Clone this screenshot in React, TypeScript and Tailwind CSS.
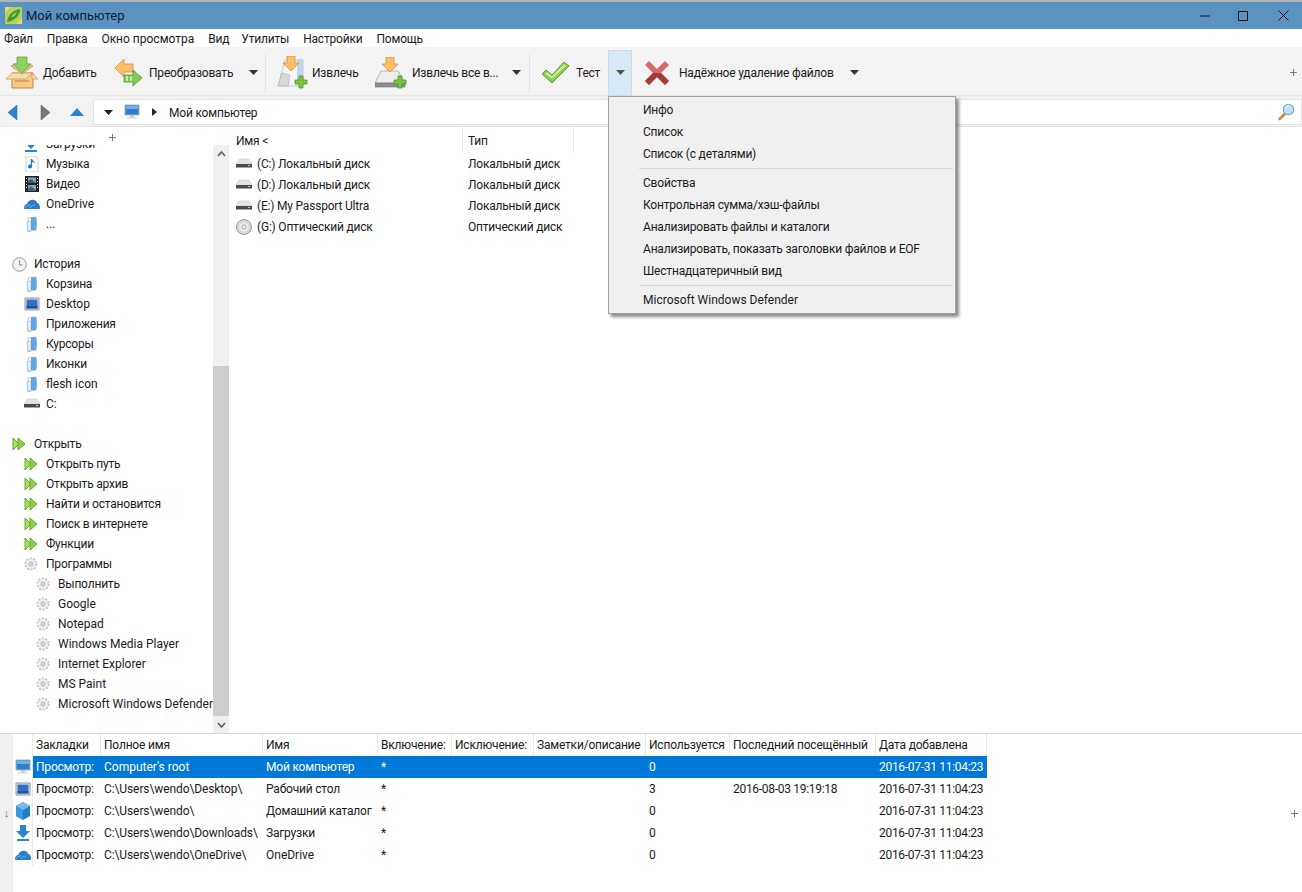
import React from 'react';

const font = "[font-family:'Roboto','Noto_Sans',sans-serif]";

// roboto runs a little wide on cyrillic and digits compared to the original ui font
const tr = (s: string) => {
  if (/[А-Яа-яЁё]/.test(s)) return 'tracking-[-0.2px]';
  if (/^\d{4}-/.test(s)) return 'tracking-[-0.3px]';
  if (s.includes('\\')) return 'tracking-[-0.1px]';
  return 'tracking-normal';
};

const Caret = ({ className = 'text-[#333]' }: { className?: string }) => (
  <svg width="9" height="5" viewBox="0 0 9 5" className={className}><path d="M0 0h9L4.5 5z" fill="currentColor" /></svg>
);

const Plus = () => (
  <svg width="7" height="7" viewBox="0 0 7 7"><path d="M3.5 0v7M0 3.5h7" stroke="#777" strokeWidth="1" /></svg>
);

const AppIcon = () => (
  <svg width="17" height="17" viewBox="0 0 17 17">
    <rect width="17" height="17" fill="#b9cf5a" />
    <path d="M0 0h6L0 6zM17 17h-6l6-6z" fill="#e6d87a" />
    <path d="M2 15C3 8 8 3 15 2 15 9 9 14 2 15z" fill="#3f9a2e" />
    <path d="M6 10c1-2 3-4 6-5-1 3-3 5-6 5z" fill="#8fd35a" />
  </svg>
);

const GreenPlus = ({ x, y }: { x: number; y: number }) => (
  <path transform={`translate(${x} ${y})`} d="M4 0h4v4h4v4H8v4H4V8H0V4h4z" fill="#7cc242" stroke="#4f9a23" strokeWidth=".8" />
);

const OrangeDown = ({ x, y }: { x: number; y: number }) => (
  <path transform={`translate(${x} ${y})`} d="M4 0h8v7h4l-8 8-8-8h4z" fill="#fbbf6a" stroke="#e08f2a" strokeWidth=".8" />
);

const BoxAdd = () => (
  <svg width="34" height="34" viewBox="0 0 34 34">
    <path d="M7 17h21v15H7z" fill="#f4c98a" stroke="#c98a3a" />
    <path d="M7 17 1 23h20l6-6zM27 17l6 6h-6z" fill="#f7dcae" stroke="#d09a50" strokeWidth=".8" />
    <path d="M6 10l11 8 11-8-4-2H10z" fill="#e8c48c" stroke="#c98a3a" strokeWidth=".7" />
    <path d="M12 1h10v7h4l-9 9-9-9h4z" fill="#8fd066" stroke="#5fa838" strokeWidth=".8" />
    <path d="M10 24h14v2H10z" fill="#c98a3a" opacity=".6" />
  </svg>
);

const Convert = () => (
  <svg width="28" height="28" viewBox="0 0 28 28">
    <path d="M0 9l9-9v5h9v8H9v5z" fill="#fbbf6a" stroke="#dd8d2b" strokeWidth=".8" />
    <path d="M27 19l-9-8v5H9v7h9v4z" fill="#86c957" stroke="#4f9a23" strokeWidth=".8" />
    <path d="M11 17h2v5h-2zM15 17h2v5h-2z" fill="#c6eaa6" />
  </svg>
);

const ExtractDoc = () => (
  <svg width="32" height="34" viewBox="0 0 32 34">
    <path d="M9 4h18v26H2z" fill="#f4f6f8" stroke="#c4c8cc" />
    <path d="M21 3h6v24h-6z" fill="#bcd6ec" />
    <path d="M2 30l4-13 8 2-2 11z" fill="#d8dbde" stroke="#aaa" strokeWidth=".6" />
    <OrangeDown x={7} y={0} />
    <GreenPlus x={19} y={20} />
  </svg>
);

const ExtractDrive = () => (
  <svg width="32" height="32" viewBox="0 0 32 32">
    <path d="M6 14h17l7 12H0z" fill="#eceded" stroke="#b5b5b5" />
    <path d="M0 26h30v4H0z" fill="#8e8e8e" stroke="#6f6f6f" strokeWidth=".6" />
    <OrangeDown x={7} y={0} />
    <GreenPlus x={19} y={19} />
  </svg>
);

const Check = () => (
  <svg width="27" height="22" viewBox="0 0 27 22">
    <path d="M0 12l4-4 6 5L22 0l5 4L10 21z" fill="#8ccb4e" stroke="#5f9f2c" />
    <path d="M3 12l2-2 5 4L22 2l2 2L10 17z" fill="#c4e89c" />
  </svg>
);

const RedX = () => (
  <svg width="24" height="24" viewBox="0 0 24 24">
    <path d="M4 0l8 8 8-8 4 4-8 8 8 8-4 4-8-8-8 8-4-4 8-8-8-8z" fill="#d66a6a" />
    <path d="M8 12l4 0 4 0 8 8-4 4-8-8-8 8-4-4z" fill="#a23b3b" />
  </svg>
);

const Monitor = ({ size = 16 }: { size?: number }) => (
  <svg width={size} height={size} viewBox="0 0 16 16">
    <path d="M1 1h14v10H1z" fill="#2f7fd0" stroke="#9fb4c4" />
    <path d="M2 2h12v3H2z" fill="#6fb0ea" />
    <path d="M6 11h4v2H6z" fill="#c4c8cc" />
    <path d="M3 13h10v1.5H3z" fill="#d6d8da" />
  </svg>
);

const Desktop = () => (
  <svg width="16" height="16" viewBox="0 0 16 16">
    <path d="M1 2h14v12H1z" fill="#e8ecef" stroke="#778" strokeWidth=".8" />
    <path d="M2.5 3.5h11v9h-11z" fill="#2f72c4" />
    <path d="M2.5 10h11v2.500h-11z" fill="#1d569e" />
  </svg>
);

const Folder = () => (
  <svg width="16" height="16" viewBox="0 0 16 16">
    <path d="M4 2l8-1v13l-8 1.500z" fill="#fff" stroke="#9fb0bc" strokeWidth=".7" />
    <path d="M7 1.500l5-.5c1 4 1 9 0 13H7z" fill="#5fa6e6" />
    <path d="M3 6l4-1v10l-3 .5z" fill="#e4eef6" stroke="#90a8ba" strokeWidth=".6" />
  </svg>
);

const Music = () => (
  <svg width="16" height="16" viewBox="0 0 16 16">
    <path d="M2 0h9l3 3v13H2z" fill="#fff" stroke="#b8c2ca" strokeWidth=".8" />
    <path d="M8 3v7.500a2 2 0 1 1-1.200-1.800V3z M8 3c1 2 3 2 3 5-1-2-2-2-3-2z" fill="#1f7cc7" />
  </svg>
);

const Film = () => (
  <svg width="16" height="16" viewBox="0 0 16 16">
    <path d="M1 0h14v16H1z" fill="#222" />
    <path d="M4 1.500h8v5.500H4zM4 9h8v5.500H4z" fill="#7fa8bc" />
    <path d="M4 5l3-2 5 4H4zM4 12.500l3-2 5 4H4z" fill="#3d5f70" />
    <path d="M2 2h1v1H2zM2 5h1v1H2zM2 8h1v1H2zM2 11h1v1H2zM13 2h1v1h-1zM13 5h1v1h-1zM13 8h1v1h-1zM13 11h1v1h-1z" fill="#ddd" />
  </svg>
);

const Cloud = () => (
  <svg width="16" height="16" viewBox="0 0 16 16">
    <path d="M0 12c0-3 2-4 3-4 1-3 4-5 7-4 2 .5 3 2 3 3 2 0 3 2 3 5 0 .5-.5 1-1 1H1c-.5 0-1-.5-1-1z" fill="#2a7dc9" />
    <path d="M1 12c1-2 3-3 5-3M6 12c1-2 3-3 5-3" stroke="#8cc2ec" strokeWidth=".8" fill="none" />
  </svg>
);

const Clock = () => (
  <svg width="15" height="15" viewBox="0 0 15 15">
    <circle cx="7.500" cy="7.500" r="6.800" fill="#f2f2f2" stroke="#9a9a9a" />
    <path d="M7.500 3v5h3" stroke="#8a8a8a" fill="none" />
  </svg>
);

const Disk = () => (
  <svg width="16" height="16" viewBox="0 0 16 16">
    <path d="M3 3h10l3 5H0z" fill="#e4e4e4" stroke="#c4c4c4" strokeWidth=".5" />
    <path d="M0 8h16v3.500H0z" fill="#4a4a4a" />
    <path d="M12 9h2v1h-2z" fill="#ccc" />
  </svg>
);

const Cd = () => (
  <svg width="16" height="16" viewBox="0 0 16 16">
    <circle cx="8" cy="8" r="7.500" fill="#d8d8d8" stroke="#9a9a9a" />
    <circle cx="8" cy="8" r="4.500" fill="#ececec" />
    <circle cx="8" cy="8" r="2" fill="#fff" stroke="#a0a0a0" />
  </svg>
);

const Arrows = () => (
  <svg width="14" height="14" viewBox="0 0 14 14">
    <path d="M1 1l6 6-6 6z" fill="#a8e05a" stroke="#58a32a" strokeWidth=".9" />
    <path d="M6 1l7 6-7 6z" fill="#8fd14a" stroke="#58a32a" strokeWidth=".9" />
  </svg>
);

const Gear = () => (
  <svg width="14" height="14" viewBox="0 0 14 14">
    <circle cx="7" cy="7" r="5.600" fill="#ededed" stroke="#c2c2c2" strokeWidth="1.800" strokeDasharray="2 1.500" />
    <circle cx="7" cy="7" r="4.600" fill="#efefef" />
    <circle cx="7" cy="7" r="2.300" fill="#d4d4d4" stroke="#b0b0b0" strokeWidth=".6" />
  </svg>
);

const Home = () => (
  <svg width="16" height="18" viewBox="0 0 16 18">
    <path d="M8 0l7 4v10l-7 4-7-4V4z" fill="#1f7cc7" />
    <path d="M8 0l7 4-7 4-7-4z" fill="#7cbcec" />
    <path d="M8 8v10l-7-4V4z" fill="#3e96dc" />
  </svg>
);

const Download = () => (
  <svg width="14" height="16" viewBox="0 0 14 16">
    <path d="M4 0h6v6h4l-7 7-7-7h4z" fill="#2a84d2" />
    <path d="M1 14h12v2H1z" fill="#2a84d2" />
  </svg>
);

const Search = () => (
  <svg width="18" height="18" viewBox="0 0 18 18">
    <path d="M7 10l-5.500 5.500a1.200 1.200 0 0 0 1.500 1.500L8.500 12z" fill="#d98a35" stroke="#a96420" strokeWidth=".5" />
    <circle cx="11.500" cy="6.500" r="5.200" fill="#bfe0f5" stroke="#7fa8c4" strokeWidth="1.200" />
    <path d="M8.500 5c.5-1.500 2-2.500 3.500-2.500" stroke="#fff" fill="none" />
  </svg>
);

const ToolButton = ({ icon, label, caret, textMl, w }: { icon: React.ReactNode; label: string; caret?: number; textMl: string; w: string }) => (
  <div className={`flex items-center shrink-0 ${w}`}>
    {icon}
    <span className={`${textMl} whitespace-nowrap tracking-[-0.2px]`}>{label}</span>
    {caret !== undefined && <span className="flex" style={{ marginLeft: caret }}><Caret /></span>}
  </div>
);

type TreeRow = { label?: string; level?: number; icon?: React.ReactNode };

const tree: TreeRow[] = [
  { label: 'Загрузки', level: 1, icon: <Download /> },
  { label: 'Музыка', level: 1, icon: <Music /> },
  { label: 'Видео', level: 1, icon: <Film /> },
  { label: 'OneDrive', level: 1, icon: <Cloud /> },
  { label: '...', level: 1, icon: <Folder /> },
  {},
  { label: 'История', level: 0, icon: <Clock /> },
  { label: 'Корзина', level: 1, icon: <Folder /> },
  { label: 'Desktop', level: 1, icon: <Desktop /> },
  { label: 'Приложения', level: 1, icon: <Folder /> },
  { label: 'Курсоры', level: 1, icon: <Folder /> },
  { label: 'Иконки', level: 1, icon: <Folder /> },
  { label: 'flesh icon', level: 1, icon: <Folder /> },
  { label: 'C:', level: 1, icon: <Disk /> },
  {},
  { label: 'Открыть', level: 0, icon: <Arrows /> },
  { label: 'Открыть путь', level: 1, icon: <Arrows /> },
  { label: 'Открыть архив', level: 1, icon: <Arrows /> },
  { label: 'Найти и остановится', level: 1, icon: <Arrows /> },
  { label: 'Поиск в интернете', level: 1, icon: <Arrows /> },
  { label: 'Функции', level: 1, icon: <Arrows /> },
  { label: 'Программы', level: 1, icon: <Gear /> },
  { label: 'Выполнить', level: 2, icon: <Gear /> },
  { label: 'Google', level: 2, icon: <Gear /> },
  { label: 'Notepad', level: 2, icon: <Gear /> },
  { label: 'Windows Media Player', level: 2, icon: <Gear /> },
  { label: 'Internet Explorer', level: 2, icon: <Gear /> },
  { label: 'MS Paint', level: 2, icon: <Gear /> },
  { label: 'Microsoft Windows Defender', level: 2, icon: <Gear /> },
];

const levelPad = ['pl-[12px]', 'pl-[24px]', 'pl-[36px]'];

const drives = [
  { name: '(C:) Локальный диск', type: 'Локальный диск', icon: <Disk /> },
  { name: '(D:) Локальный диск', type: 'Локальный диск', icon: <Disk /> },
  { name: '(E:) My Passport Ultra', type: 'Локальный диск', icon: <Disk /> },
  { name: '(G:) Оптический диск', type: 'Оптический диск', icon: <Cd /> },
];

const columns = [
  { title: 'Закладки', w: 'w-[68px]' },
  { title: 'Полное имя', w: 'w-[162px]' },
  { title: 'Имя', w: 'w-[115px]' },
  { title: 'Включение:', w: 'w-[74px]' },
  { title: 'Исключение:', w: 'w-[82px]' },
  { title: 'Заметки/описание', w: 'w-[112px]' },
  { title: 'Используется', w: 'w-[84px]' },
  { title: 'Последний посещённый', w: 'w-[146px]' },
  { title: 'Дата добавлена', w: 'w-[111px]' },
];

const bookmarks = [
  { icon: <Monitor />, cells: ['Просмотр:', "Computer's root", 'Мой компьютер', '*', '', '', '0', '', '2016-07-31 11:04:23'], selected: true },
  { icon: <Desktop />, cells: ['Просмотр:', 'C:\\Users\\wendo\\Desktop\\', 'Рабочий стол', '*', '', '', '3', '2016-08-03 19:19:18', '2016-07-31 11:04:23'] },
  { icon: <Home />, cells: ['Просмотр:', 'C:\\Users\\wendo\\', 'Домашний каталог', '*', '', '', '0', '', '2016-07-31 11:04:23'] },
  { icon: <Download />, cells: ['Просмотр:', 'C:\\Users\\wendo\\Downloads\\', 'Загрузки', '*', '', '', '0', '', '2016-07-31 11:04:23'] },
  { icon: <Cloud />, cells: ['Просмотр:', 'C:\\Users\\wendo\\OneDrive\\', 'OneDrive', '*', '', '', '0', '', '2016-07-31 11:04:23'] },
];

const menuGroups = [
  ['Инфо', 'Список', 'Список (с деталями)'],
  ['Свойства', 'Контрольная сумма/хэш-файлы', 'Анализировать файлы и каталоги', 'Анализировать, показать заголовки файлов и EOF', 'Шестнадцатеричный вид'],
  ['Microsoft Windows Defender'],
];

export default function App() {
  return (
    <div className={`relative w-[1302px] h-[892px] overflow-hidden bg-white text-[12px] leading-none text-[#1a1a1a] ${font}`}>
      {/* title bar */}
      <div className="h-[2px] bg-[#aeb6ba]" />
      <div className="h-[27px] bg-[#5a93c1] flex items-center pl-[5px]">
        <AppIcon />
        <span className="ml-[4px] text-[13px] text-[#10202c] pb-[1px]">Мой компьютер</span>
        <div className="ml-auto flex items-center">
          <svg width="10" height="10" viewBox="0 0 10 10" className="mr-[28px]"><path d="M0 5h10" stroke="#111" strokeWidth="1" /></svg>
          <svg width="10" height="10" viewBox="0 0 10 10" className="mr-[30px]"><path d="M.5.5h9v9h-9z" stroke="#111" fill="none" /></svg>
          <svg width="11" height="11" viewBox="0 0 11 11" className="mr-[13px]"><path d="M.5.5l10 10M10.500.5l-10 10" stroke="#111" fill="none" /></svg>
        </div>
      </div>

      {/* menu */}
      <div className="h-[18px] bg-white flex items-center gap-[14px] pl-[4px] pt-[2px] tracking-[-0.2px]">
        <span>Файл</span>
        <span>Правка</span>
        <span className="tracking-normal">Окно просмотра</span>
        <span className="-mr-[2px]">Вид</span>
        <span>Утилиты</span>
        <span>Настройки</span>
        <span>Помощь</span>
      </div>

      {/* toolbar */}
      <div className="relative h-[49px] bg-[#f3f3f3] flex items-center pl-[5px] pt-[3px] border-b border-[#e6e6e6]">
        <ToolButton icon={<BoxAdd />} label="Добавить" textMl="ml-[4px]" w="w-[110px]" />
        <ToolButton icon={<Convert />} label="Преобразовать" textMl="ml-[6px]" caret={16} w="w-[150px]" />
        <div className="w-px h-[38px] bg-[#e2e2e2] mr-[10px]" />
        <ToolButton icon={<ExtractDoc />} label="Извлечь" textMl="ml-[4px]" w="w-[99px]" />
        <ToolButton icon={<ExtractDrive />} label="Извлечь все в..." textMl="ml-[5px]" caret={14} w="w-[154px]" />
        <div className="w-px h-[38px] bg-[#e2e2e2] mr-[12px]" />
        <ToolButton icon={<Check />} label="Тест" textMl="ml-[7px]" w="w-[66px]" />
        <div className="w-[24px] h-[46px] bg-[#d9e8f5] border border-[#c6dcef] flex items-center justify-center"><Caret className="text-[#4a5a4a]" /></div>
        <div className="ml-[13px]"><ToolButton icon={<RedX />} label="Надёжное удаление файлов" textMl="ml-[10px]" caret={16} w="w-[230px]" /></div>
        <span className="ml-auto mr-[5px] flex"><Plus /></span>
      </div>

      {/* address bar */}
      <div className="h-[31px] bg-[#f3f3f3] flex items-center pt-[2px] border-b border-[#e6e6e6]">
        <svg width="10" height="15" viewBox="0 0 10 15" className="ml-[8px]"><path d="M9 0v15L0 7.500z" fill="#2a84d2" stroke="#1f6cb0" strokeWidth=".5" /></svg>
        <svg width="10" height="15" viewBox="0 0 10 15" className="ml-[22px]"><path d="M1 0v15l9-7.500z" fill="#7a7a7a" stroke="#555" strokeWidth=".5" /></svg>
        <svg width="14" height="8" viewBox="0 0 14 8" className="ml-[20px]"><path d="M0 8h14L7 0z" fill="#2a84d2" /></svg>
        <div className="ml-[9px] flex-1 h-[26px] bg-white border border-[#e4e4e4] flex items-center">
          <span className="ml-[10px] flex"><Caret className="text-[#222]" /></span>
          <span className="ml-[11px] flex"><Monitor /></span>
          <svg width="5" height="8" viewBox="0 0 5 8" className="ml-[12px]"><path d="M0 0l5 4-5 4z" fill="#222" /></svg>
          <span className="ml-[12px] tracking-[-0.2px] pt-[1px]">Мой компьютер</span>
          <span className="ml-auto mr-[6px] flex"><Search /></span>
        </div>
      </div>

      {/* main */}
      <div className="flex h-[606px]">
        <div className="w-[213px] flex flex-col shrink-0">
          <div className="h-[18px] flex items-center justify-center shrink-0 pt-[2px] pl-[12px]"><Plus /></div>
          <div className="flex-1 overflow-hidden">
            <div className="-mt-[11px]">
              {tree.map((row, i) => (
                <div key={i} className={`h-[20px] flex items-center whitespace-nowrap ${levelPad[row.level ?? 0]}`}>
                  {row.icon && <span className="w-[22px] flex justify-start shrink-0">{row.icon}</span>}
                  <span className={tr(row.label ?? '')}>{row.label}</span>
                </div>
              ))}
            </div>
          </div>
        </div>

        {/* sidebar scrollbar */}
        <div className="w-[16px] flex flex-col shrink-0 mt-[18px] bg-[#f0f0f0]">
          <div className="h-[17px] flex items-center justify-center">
            <svg width="9" height="6" viewBox="0 0 9 6"><path d="M1 5l3.500-4L8 5" stroke="#4a6a4a" strokeWidth="1.600" fill="none" /></svg>
          </div>
          <div className="h-[204px]" />
          <div className="h-[350px] bg-[#cdcdcd]" />
          <div className="flex-1 flex items-center justify-center">
            <svg width="9" height="6" viewBox="0 0 9 6"><path d="M1 1l3.500 4L8 1" stroke="#4a6a4a" strokeWidth="1.600" fill="none" /></svg>
          </div>
        </div>

        {/* file list */}
        <div className="flex-1 pl-px">
          <div className="h-[26px] flex items-center">
            <div className="w-[233px] h-full flex items-center pl-[6px] pt-[1px] border-r border-[#e8e8e8] tracking-[-0.2px]">Имя &lt;</div>
            <div className="w-[111px] h-full flex items-center pl-[5px] pt-[1px] border-r border-[#e8e8e8] tracking-[-0.2px]">Тип</div>
          </div>
          {drives.map(d => (
            <div key={d.name} className="h-[21px] flex items-center tracking-[-0.2px]">
              <div className="w-[233px] pl-[6px] flex items-center">
                {d.icon}
                <span className="ml-[5px]">{d.name}</span>
              </div>
              <div className="pl-[5px]">{d.type}</div>
            </div>
          ))}
        </div>
      </div>

      {/* bookmarks */}
      <div className="h-[159px] border-t border-[#d8d8d8] flex">
        <div className="w-[13px] bg-[#f0f0f0] shrink-0 flex items-center justify-center pt-[1px] text-[#666] text-[11px]">↓</div>
        <div className="flex-1">
          <div className="flex h-[22px]">
            <div className="w-[20px] border-r border-[#e8e8e8]" />
            {columns.map(c => (
              <div key={c.title} className={`${c.w} shrink-0 flex items-center pl-[3px] border-r border-[#e8e8e8] whitespace-nowrap overflow-hidden tracking-[-0.2px]`}>{c.title}</div>
            ))}
          </div>
          {bookmarks.map((b, i) => (
            <div key={i} className="flex h-[22px]">
              <div className="w-[20px] shrink-0 flex items-center justify-center border-r border-[#e8e8e8]">{b.icon}</div>
              <div className={`flex ${b.selected ? 'bg-[#0078d7] text-white' : ''}`}>
                {b.cells.map((text, j) => (
                  <div key={j} className={`${columns[j].w} shrink-0 flex items-center pl-[3px] whitespace-nowrap ${tr(text)}`}>{text}</div>
                ))}
              </div>
            </div>
          ))}
        </div>
        <div className="w-[16px] shrink-0 flex items-center justify-center"><Plus /></div>
      </div>

      {/* test dropdown */}
      <div className="absolute left-[608px] top-[96px] w-[348px] h-[218px] bg-[#f0f0f0] border border-[#a0a0a0] shadow-[3px_3px_3px_rgba(0,0,0,0.45)] pt-[2px]">
        {menuGroups.map((group, i) => (
          <div key={i}>
            {i > 0 && <div className="h-px bg-[#d7d7d7] ml-[30px] mr-[2px] my-[3px]" />}
            {group.map(item => (
              <div key={item} className={`h-[22px] flex items-center pl-[34px] whitespace-nowrap ${tr(item)}`}>{item}</div>
            ))}
          </div>
        ))}
      </div>
    </div>
  );
}
